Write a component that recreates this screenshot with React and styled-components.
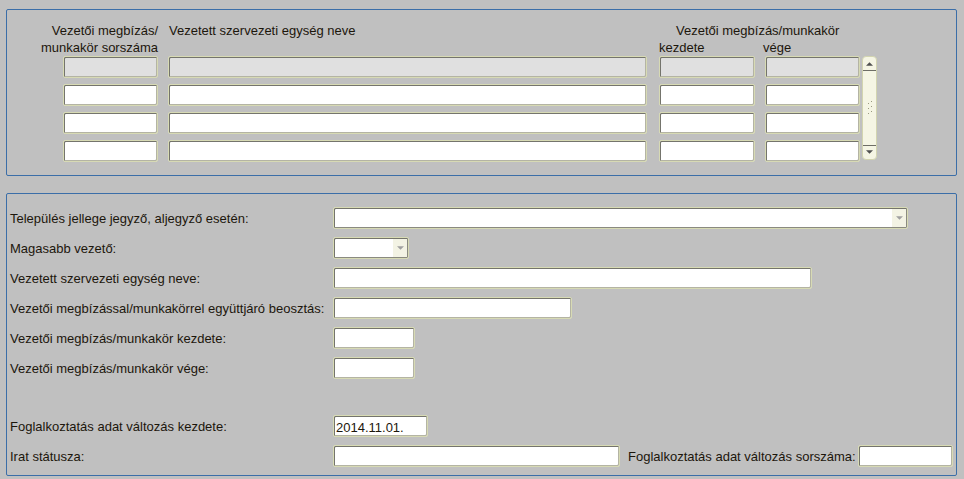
import React from "react";
import styled, { createGlobalStyle } from "styled-components";

const Global = createGlobalStyle`
  html, body { margin: 0; padding: 0; background: #c0c0c0; }
  body { font-family: "Liberation Sans", Arial, sans-serif; font-size: 13px; color: #1c160c; }
  * { box-sizing: border-box; }
`;

const Page = styled.div`
  width: 964px;
  height: 479px;
  padding: 9px 7px 0 6px;
  display: flex;
  flex-direction: column;
  gap: 17px;
`;

const Panel = styled.section`
  border: 1px solid #3b6ea8;
  border-radius: 2px;
  height: ${(p) => p.$h}px;
`;

const TablePanel = styled(Panel)`
  padding: 12px 0 0 56px;
`;

const HeaderRow = styled.div`
  display: flex;
  line-height: 17px;
  height: 34px;
`;

const HeadCell = styled.div`
  flex: none;
  width: ${(p) => p.$w}px;
  margin-left: ${(p) => p.$ml || 0}px;
  display: flex;
  flex-direction: column;
  align-items: ${(p) => (p.$right ? "flex-end" : "flex-start")};
  white-space: nowrap;
  padding-left: ${(p) => p.$pl || 0}px;
`;

const GroupTitle = styled.span`
  padding-left: 17px;
`;

const SubHeads = styled.div`
  display: flex;
  width: 100%;
`;

const SubHead = styled.span`
  width: ${(p) => (p.$w ? `${p.$w}px` : "auto")};
`;

const TableBody = styled.div`
  display: flex;
  align-items: flex-start;
`;

const Rows = styled.div`
  display: flex;
  flex-direction: column;
  gap: 6px;
`;

const Row = styled.div`
  display: flex;
`;

const Field = styled.input`
  flex: none;
  width: ${(p) => p.$w}px;
  margin: 0 0 0 ${(p) => p.$ml || 0}px;
  height: 22px;
  border: 1px solid #d7dab4;
  border-radius: 2px;
  box-shadow: inset 1px 1px 0 #74746c, inset -1px -1px 0 #b4b4a4;
  background: ${(p) => (p.$disabled ? "#e0e0e0" : "#ffffff")};
  font-family: "Liberation Sans", Arial, sans-serif;
  font-size: 13px;
  color: #1c160c;
  padding: 2px 2px 0;
  outline: none;
  display: block;
`;

const ScrollBar = styled.div`
  width: 15px;
  margin-left: 2px;
  height: 104px;
  border: 1px solid #d2d4b0;
  border-radius: 4px;
  background: #f5f5e4;
  display: flex;
  flex-direction: column;
  align-items: stretch;
`;

const ScrollBtn = styled.div`
  height: 14px;
  display: flex;
  align-items: center;
  justify-content: center;
  ${(p) => (p.$up ? "border-bottom: 1px solid #6e6e66;" : "border-top: 1px solid #6e6e66;")}
`;

const Grip = styled.div`
  flex: 1;
  display: flex;
  align-items: center;
  justify-content: center;
`;

const FormPanel = styled(Panel)`
  padding: 13px 4px 0 3px;
  display: flex;
  flex-direction: column;
  gap: 8px;
`;

const FormRow = styled.div`
  display: flex;
  align-items: center;
  height: 22px;
  margin-top: ${(p) => p.$mt || 0}px;
`;

const Label = styled.label`
  width: 323px;
  white-space: nowrap;
  flex: none;
`;

const InlineLabel = styled.label`
  margin-left: 8px;
  width: 230px;
  flex: none;
  white-space: nowrap;
`;

const SelectBox = styled.div`
  width: ${(p) => p.$w}px;
  height: 22px;
  border: 1px solid #d7dab4;
  border-radius: 2px;
  box-shadow: inset 1px 1px 0 #74746c, inset -1px -1px 0 #8a8a80;
  background: #fff;
  display: flex;
  justify-content: flex-end;
  padding: 1px;
`;

const SelectArrow = styled.div`
  width: 14px;
  background: #f3f3e4;
  display: flex;
  align-items: center;
  justify-content: center;
`;

const Tri = ({ up, color = "#505050", w = 8 }) => (
  <svg width={w} height="5" viewBox="0 0 8 5">
    {up ? <path d="M0 5 L4 1 L8 5 Z" fill={color} /> : <path d="M0 0 L8 0 L4 4 Z" fill={color} />}
  </svg>
);

const GripIcon = () => (
  <svg width="9" height="14" viewBox="0 0 9 14">
    <g fill="#9a9a80">
      <rect x="6" y="0" width="1" height="1" />
      <rect x="3" y="2" width="1" height="1" />
      <rect x="6" y="5" width="1" height="1" />
      <rect x="3" y="7" width="1" height="1" />
      <rect x="6" y="10" width="1" height="1" />
      <rect x="3" y="12" width="1" height="1" />
    </g>
  </svg>
);

const Select = ({ w }) => (
  <SelectBox $w={w}>
    <SelectArrow>
      <Tri color="#a0a0a0" w={7} />
    </SelectArrow>
  </SelectBox>
);

const rows = [true, false, false, false];

export default function App() {
  return (
    <>
      <Global />
      <Page>
        <TablePanel $h={167}>
          <HeaderRow>
            <HeadCell $w={95} $right>
              <span>Vezetői megbízás/</span>
              <span>munkakör sorszáma</span>
            </HeadCell>
            <HeadCell $w={479} $ml={10} $pl={1}>
              Vezetett szervezeti egység neve
            </HeadCell>
            <HeadCell $w={201} $ml={12}>
              <GroupTitle>Vezetői megbízás/munkakör</GroupTitle>
              <SubHeads>
                <SubHead $w={104}>kezdete</SubHead>
                <SubHead>vége</SubHead>
              </SubHeads>
            </HeadCell>
          </HeaderRow>
          <TableBody>
            <Rows>
              {rows.map((dis, i) => (
                <Row key={i}>
                  <Field $w={95} $disabled={dis} readOnly value="" />
                  <Field $w={479} $ml={10} $disabled={dis} readOnly value="" />
                  <Field $w={96} $ml={12} $disabled={dis} readOnly value="" />
                  <Field $w={95} $ml={10} $disabled={dis} readOnly value="" />
                </Row>
              ))}
            </Rows>
            <ScrollBar>
              <ScrollBtn $up>
                <Tri up w={7} />
              </ScrollBtn>
              <Grip>
                <GripIcon />
              </Grip>
              <ScrollBtn>
                <Tri w={7} />
              </ScrollBtn>
            </ScrollBar>
          </TableBody>
        </TablePanel>

        <FormPanel $h={283}>
          <FormRow>
            <Label>Település jellege jegyző, aljegyző esetén:</Label>
            <Select w={575} />
          </FormRow>
          <FormRow>
            <Label>Magasabb vezető:</Label>
            <Select w={76} />
          </FormRow>
          <FormRow>
            <Label>Vezetett szervezeti egység neve:</Label>
            <Field $w={479} readOnly value="" />
          </FormRow>
          <FormRow>
            <Label>Vezetői megbízással/munkakörrel együttjáró beosztás:</Label>
            <Field $w={239} readOnly value="" />
          </FormRow>
          <FormRow>
            <Label>Vezetői megbízás/munkakör kezdete:</Label>
            <Field $w={82} readOnly value="" />
          </FormRow>
          <FormRow>
            <Label>Vezetői megbízás/munkakör vége:</Label>
            <Field $w={82} readOnly value="" />
          </FormRow>
          <FormRow $mt={28}>
            <Label>Foglalkoztatás adat változás kezdete:</Label>
            <Field $w={95} readOnly value="2014.11.01." />
          </FormRow>
          <FormRow>
            <Label>Irat státusza:</Label>
            <Field $w={287} readOnly value="" />
            <InlineLabel>Foglalkoztatás adat változás sorszáma:</InlineLabel>
            <Field $w={95} readOnly value="" />
          </FormRow>
        </FormPanel>
      </Page>
    </>
  );
}
